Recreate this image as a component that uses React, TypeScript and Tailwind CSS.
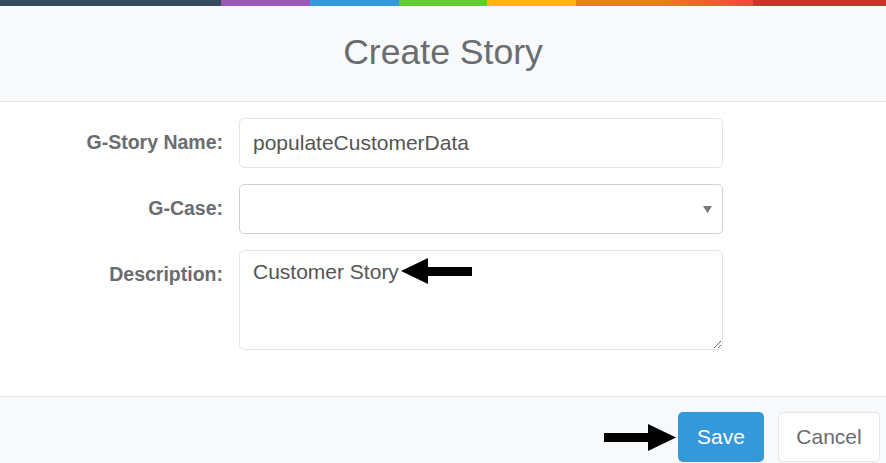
import React from "react";

function LeftArrow() {
  return (
    <svg width="71" height="26" viewBox="0 0 71 26" className="absolute left-[162px] top-[8px]">
      <polygon points="0,13 27,0 27,9 71,9 71,18 27,18 27,26" fill="#000" />
    </svg>
  );
}

function RightArrow() {
  return (
    <svg width="72" height="27" viewBox="0 0 72 27" className="absolute left-[604px] top-[27px]">
      <polygon points="72,13.5 44,0 44,9 0,9 0,18 44,18 44,27" fill="#000" />
    </svg>
  );
}

export default function App() {
  return (
    <div className="w-[886px] h-[463px] bg-white overflow-hidden font-['Liberation_Sans',Arial,sans-serif]">
      <div className="h-[6px] bg-[linear-gradient(to_right,#34495e,#34495e_25%,#9b59b6_25%,#9b59b6_35%,#3498db_35%,#3498db_45%,#62cb31_45%,#62cb31_55%,#ffb606_55%,#ffb606_65%,#e67e22_65%,#e67e22_75%,#e74c3c_85%,#c0392b_85%,#c0392b_100%)]" />
      <div className="h-[96px] bg-[#f7f9fa] border-b border-[#e4e5e7] flex items-center justify-center">
        <h2 className="text-[35.6px] text-[#6a6c6f] leading-none font-normal pb-[2px]">Create Story</h2>
      </div>
      <div className="h-[294px] pt-[16px]">
        <div className="grid grid-cols-[223px_484px] gap-x-[16px] gap-y-[16px]">
          <label className="h-[50px] flex items-center justify-end text-[19.5px] font-bold text-[#6a6c6f]">G-Story Name:</label>
          <input
            defaultValue="populateCustomerData"
            className="h-[50px] w-full border border-[#e4e5e7] rounded-[5px] bg-white px-[13px] text-[21px] text-[#555] outline-none"
          />
          <label className="h-[50px] flex items-center justify-end text-[19.5px] font-bold text-[#6a6c6f]">G-Case:</label>
          <div className="h-[50px] w-full border border-[#cfd1d3] rounded-[5px] bg-white flex items-center justify-end pr-[10px]">
            <svg width="9" height="7" viewBox="0 0 9 7">
              <polygon points="0,0 9,0 4.5,7" fill="#777" />
            </svg>
          </div>
          <label className="h-[50px] flex items-center justify-end text-[19.5px] font-bold text-[#6a6c6f]">Description:</label>
          <div className="relative h-[100px]">
            <textarea
              defaultValue="Customer Story"
              className="h-[100px] w-full block border border-[#e4e5e7] rounded-[5px] bg-white px-[13px] pt-[6px] text-[21px] leading-[30px] text-[#555] outline-none"
            />
            <LeftArrow />
          </div>
        </div>
      </div>
      <div className="relative h-[67px] bg-[#f7f9fa] border-t border-[#e4e5e7] flex justify-end items-start pt-[15px] pr-[6px] gap-[14px]">
        <RightArrow />
        <button className="h-[50px] w-[86px] rounded-[5px] bg-[#3498db] text-white text-[21px]">Save</button>
        <button className="h-[50px] w-[102px] rounded-[5px] bg-white border border-[#e4e5e7] text-[#6a6c6f] text-[21px]">Cancel</button>
      </div>
    </div>
  );
}
